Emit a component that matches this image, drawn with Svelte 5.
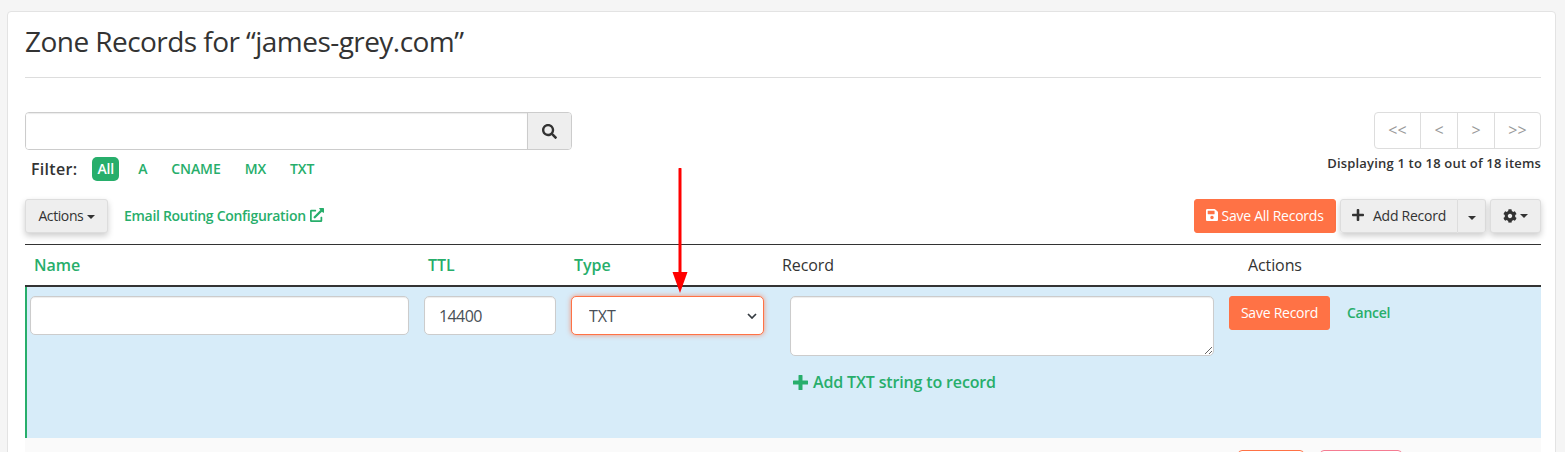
<script>
    const filters = ["All", "A", "CNAME", "MX", "TXT"];
    const pages = ["<<", "<", ">", ">>"];
</script>

<div class="page">
    <div class="card">
        <h1>Zone Records for “james-grey.com”</h1>
        <hr />

        <div class="top-row">
            <div class="left-col">
                <div class="search">
                    <input type="text" />
                    <button class="search-btn" aria-label="Search">
                        <svg viewBox="0 0 512 512" width="15" height="15"><path fill="#333" d="M505 442.700L405.300 343c-4.500-4.500-10.600-7-17-7H372c27.600-35.300 44-79.700 44-128C416 93.100 322.900 0 208 0S0 93.100 0 208s93.100 208 208 208c48.300 0 92.700-16.400 128-44v16.300c0 6.400 2.500 12.500 7 17l99.700 99.700c9.400 9.400 24.600 9.400 33.900 0l28.300-28.300c9.400-9.400 9.400-24.600.1-34zM208 336c-70.700 0-128-57.200-128-128 0-70.700 57.200-128 128-128 70.700 0 128 57.200 128 128 0 70.700-57.200 128-128 128z"/></svg>
                    </button>
                </div>
                <div class="filter">
                    <strong>Filter:</strong>
                    {#each filters as f, i}
                        <span class="pill" class:active={i === 0}>{f}</span>
                    {/each}
                </div>
            </div>
            <div class="right-col">
                <div class="pager">
                    {#each pages as p}
                        <span class="page-btn">{p}</span>
                    {/each}
                </div>
                <div class="count">Displaying 1 to 18 out of 18 items</div>
            </div>
        </div>

        <div class="toolbar">
            <div class="tool-left">
                <button class="btn shadow">Actions <span class="caret"></span></button>
                <span class="link">Email Routing Configuration
                    <svg viewBox="0 0 512 512" width="14" height="14"><path fill="#27ae6b" d="M432 320h-32a16 16 0 0 0-16 16v112H64V128h144a16 16 0 0 0 16-16V80a16 16 0 0 0-16-16H48a48 48 0 0 0-48 48v352a48 48 0 0 0 48 48h352a48 48 0 0 0 48-48V336a16 16 0 0 0-16-16zM488 0H360c-21.400 0-32 25.900-17 41l35.700 35.700L135 320.400a24 24 0 0 0 0 34l22.600 22.600a24 24 0 0 0 34 0l243.700-243.700L471 169c15 15 41 4.500 41-17V24a24 24 0 0 0-24-24z"/></svg>
                </span>
            </div>
            <div class="tool-right">
                <button class="btn orange save-all">
                    <svg viewBox="0 0 448 512" width="12" height="14"><path fill="#fff" d="M433.900 129.900l-83.900-83.900A48 48 0 0 0 316.100 32H48C21.500 32 0 53.500 0 80v352c0 26.500 21.500 48 48 48h352c26.500 0 48-21.500 48-48V163.900a48 48 0 0 0-14.100-34zM224 416c-35.300 0-64-28.700-64-64 0-35.300 28.700-64 64-64s64 28.700 64 64c0 35.300-28.700 64-64 64zm96-304.500V212c0 6.600-5.400 12-12 12H76c-6.600 0-12-5.400-12-12V108c0-6.600 5.400-12 12-12h228.500c3.200 0 6.200 1.300 8.500 3.500l3.500 3.500a12 12 0 0 1 3.500 8.500z"/></svg>
                    Save All Records
                </button>
                <div class="split shadow">
                    <button class="btn add">
                        <svg viewBox="0 0 448 512" width="12" height="14"><path fill="#333" d="M416 208H272V64c0-17.700-14.300-32-32-32h-32c-17.700 0-32 14.300-32 32v144H32c-17.700 0-32 14.300-32 32v32c0 17.700 14.300 32 32 32h144v144c0 17.700 14.300 32 32 32h32c17.700 0 32-14.300 32-32V304h144c17.700 0 32-14.300 32-32v-32c0-17.700-14.300-32-32-32z"/></svg>
                        <span>Add Record</span>
                    </button>
                    <button class="btn drop" aria-label="More"><span class="caret"></span></button>
                </div>
                <button class="btn gear shadow" aria-label="Settings">
                    <svg viewBox="0 0 512 512" width="14" height="14"><path fill="#333" d="M487.400 315.700l-42.600-24.600c4.300-23.200 4.300-47 0-70.200l42.600-24.600c4.900-2.800 7.100-8.600 5.500-14-11.100-35.600-30-67.800-54.700-94.600-3.800-4.100-10-5.100-14.800-2.300L380.800 110c-17.900-15.400-38.500-27.300-60.800-35.100V25.800c0-5.600-3.900-10.500-9.400-11.700-36.700-8.200-74.300-7.800-109.200 0-5.500 1.200-9.400 6.100-9.400 11.700V75c-22.200 7.900-42.800 19.800-60.800 35.100L88.700 85.500c-4.900-2.800-11-1.900-14.800 2.300-24.700 26.700-43.600 58.900-54.700 94.600-1.700 5.400.6 11.200 5.500 14L67.300 221c-4.300 23.200-4.300 47 0 70.200l-42.600 24.600c-4.900 2.800-7.100 8.600-5.500 14 11.100 35.600 30 67.800 54.700 94.600 3.800 4.100 10 5.100 14.800 2.300l42.600-24.600c17.900 15.400 38.500 27.300 60.800 35.100v49.200c0 5.600 3.900 10.500 9.400 11.700 36.700 8.200 74.300 7.800 109.200 0 5.500-1.200 9.400-6.100 9.400-11.700v-49.200c22.200-7.900 42.800-19.800 60.800-35.100l42.600 24.600c4.900 2.800 11 1.900 14.800-2.300 24.700-26.700 43.600-58.900 54.700-94.600 1.500-5.500-.7-11.300-5.600-14.100zM256 336c-44.100 0-80-35.900-80-80s35.900-80 80-80 80 35.900 80 80-35.900 80-80 80z"/></svg>
                    <span class="caret"></span>
                </button>
            </div>
        </div>

        <div class="table">
            <div class="thead">
                <span class="sort">Name</span>
                <span class="sort">TTL</span>
                <span class="sort">Type</span>
                <span>Record</span>
                <span>Actions</span>
            </div>
            <div class="edit-row">
                <div><input class="field name" type="text" /></div>
                <div><input class="field ttl" type="text" value="14400" /></div>
                <div class="select-wrap">
                    <select class="field type">
                        <option>TXT</option>
                    </select>
                    <svg class="chevron" viewBox="0 0 10 6" width="10" height="6"><path d="M1 1L5 5L9 1" fill="none" stroke="#343a40" stroke-width="1.700" /></svg>
                </div>
                <div>
                    <textarea class="field record"></textarea>
                    <div class="add-string">
                        <svg viewBox="0 0 15 15" width="15" height="15"><path fill="#27ae6b" d="M5.500 0.500Q5.500 0 6 0H9Q9.500 0 9.500 0.500V5.500H14.500Q15 5.500 15 6V9Q15 9.500 14.500 9.500H9.500V14.500Q9.500 15 9 15H6Q5.500 15 5.500 14.500V9.500H0.500Q0 9.500 0 9V6Q0 5.500 0.500 5.500H5.500Z"/></svg>
                        Add TXT string to record
                    </div>
                </div>
                <div class="row-actions">
                    <button class="btn orange save">Save Record</button>
                    <span class="cancel">Cancel</span>
                </div>
            </div>
            <div class="next-row">
                <span class="ghost edit"></span>
                <span class="ghost del"></span>
            </div>
        </div>

        <!-- annotation arrow drawn over the table -->
        <svg class="arrow" viewBox="0 0 20 126" width="20" height="126">
            <path d="M10 1V108" stroke="#f00" stroke-width="3" stroke-linecap="round" fill="none" />
            <path d="M2.500 104H17.500L10 125Z" fill="#f00" />
        </svg>
    </div>
</div>

<style>
    :global(body) {
        margin: 0;
        background: #f5f5f5;
        overflow: hidden;
    }

    .page {
        height: 452px;
        overflow: hidden;
        padding: 11px 9px 0 7px;
        box-sizing: border-box;
        font-family: "Open Sans", sans-serif;
        color: #333;
        font-size: 14px;
    }

    .card {
        position: relative;
        background: #fff;
        border: 1px solid #e3e3e3;
        border-radius: 4px;
        padding: 0 14px 0 17px;
        height: 500px;
    }

    h1 {
        margin: 0;
        padding-top: 10px;
        font-size: 28px;
        line-height: 38px;
        font-weight: 400;
        letter-spacing: -0.55px;
        color: #333;
    }

    hr {
        border: 0;
        border-top: 1px solid #ddd;
        margin: 17px 0 34px;
    }

    .top-row {
        display: flex;
        justify-content: space-between;
    }

    .search {
        display: flex;
        width: 547px;
        height: 38px;
        box-sizing: border-box;
        border: 1px solid #ccc;
        border-radius: 4px;
        overflow: hidden;
    }
    .search input {
        flex: 1;
        border: 0;
        outline: 0;
        padding: 0;
        box-shadow: inset 0 1px 1px rgba(0, 0, 0, 0.08);
    }
    .search-btn {
        width: 44px;
        border: 0;
        border-left: 1px solid #ccc;
        background: #eee;
        padding: 0;
        display: flex;
        align-items: center;
        justify-content: center;
    }

    .filter {
        display: flex;
        align-items: center;
        margin-top: 7px;
        padding-left: 6px;
    }
    .filter strong {
        font-size: 16px;
        font-weight: 600;
        letter-spacing: 0.3px;
        margin-right: 15px;
    }
    .pill {
        color: #27ae6b;
        font-size: 14px;
        font-weight: 600;
        letter-spacing: -0.1px;
        line-height: 24px;
        padding: 0 5px;
        margin-right: 14px;
        border-radius: 5px;
    }
    .pill.active {
        background: #27ae6b;
        color: #fff;
    }

    .right-col {
        display: flex;
        flex-direction: column;
        align-items: flex-end;
    }
    .pager {
        display: flex;
        height: 37px;
        box-sizing: border-box;
        border: 1px solid #ddd;
        border-radius: 4px;
    }
    .page-btn {
        width: 36px;
        border-left: 1px solid #ddd;
        color: #999;
        text-align: center;
        line-height: 35px;
        font-size: 16px;
    }
    .page-btn:first-child {
        border-left: 0;
        width: 45px;
    }
    .page-btn:last-child {
        width: 45px;
    }
    .count {
        margin-top: 5px;
        font-size: 13px;
        font-weight: 600;
        letter-spacing: 0.18px;
    }

    .toolbar {
        display: flex;
        justify-content: space-between;
        margin-top: 18px;
        padding-bottom: 11px;
        border-bottom: 1px solid #333;
    }
    .tool-left,
    .tool-right {
        display: flex;
        align-items: center;
    }

    .btn {
        font-family: inherit;
        font-size: 14px;
        letter-spacing: -0.25px;
        color: #333;
        background: #eee;
        border: 1px solid #ddd;
        border-radius: 3px;
        height: 34px;
        padding: 0 0 2px;
        box-sizing: border-box;
    }
    .shadow {
        box-shadow: 0 3px 6px rgba(0, 0, 0, 0.2);
        border-radius: 3px;
    }
    .tool-left .btn {
        width: 83px;
        letter-spacing: -0.4px;
    }
    .link {
        color: #27ae6b;
        font-size: 14px;
        font-weight: 600;
        letter-spacing: -0.3px;
        margin: 0 0 2px 16px;
        display: flex;
        align-items: center;
        gap: 4px;
    }

    .caret {
        display: inline-block;
        width: 0;
        height: 0;
        vertical-align: middle;
        border-top: 4px solid #333;
        border-left: 4px solid transparent;
        border-right: 4px solid transparent;
    }

    .orange {
        background: #ff7245;
        border-color: #ff7245;
        color: #fff;
    }
    .save-all {
        width: 142px;
        display: flex;
        align-items: center;
        justify-content: center;
        gap: 3px;
    }
    .split {
        display: flex;
        margin-left: 4px;
    }
    .add {
        width: 118px;
        border-radius: 3px 0 0 3px;
        display: flex;
        align-items: center;
        justify-content: center;
        gap: 9px;
    }
    .drop {
        width: 28px;
        border-left: 0;
        padding: 0;
        border-radius: 0 3px 3px 0;
    }
    .gear {
        width: 51px;
        margin-left: 4px;
        padding: 0;
        display: flex;
        align-items: center;
        justify-content: center;
        gap: 3px;
    }

    .thead {
        display: grid;
        grid-template-columns: 394px 146px 208px 466px 1fr;
        padding-left: 9px;
        height: 40px;
        align-items: center;
        font-size: 16px;
        letter-spacing: -0.1px;
        border-bottom: 2px solid #333;
    }
    .sort {
        color: #27ae6b;
        font-weight: 600;
        letter-spacing: 0;
    }

    .edit-row {
        display: grid;
        grid-template-columns: 394px 147px 219px 439px 1fr;
        height: 151px;
        box-sizing: border-box;
        padding: 9px 0 0 3px;
        background: #d7ecf9;
        border-left: 2px solid #27ae6b;
    }
    .field {
        font-family: inherit;
        font-size: 16px;
        color: #495057;
        background: #fff;
        border: 1px solid #ccc;
        border-radius: 5px;
        box-sizing: border-box;
        height: 39px;
        padding: 0 14px;
        display: block;
        outline: 0;
        box-shadow: inset 0 1px 1px rgba(0, 0, 0, 0.075);
    }
    .name {
        width: 379px;
    }
    .ttl {
        width: 132px;
        letter-spacing: -0.6px;
    }
    .select-wrap {
        position: relative;
        width: 193px;
    }
    .type {
        width: 193px;
        appearance: none;
        padding-left: 17px;
        border-color: #ff7245;
        box-shadow: 0 0 5px rgba(255, 114, 69, 0.75);
    }
    .chevron {
        position: absolute;
        right: 7px;
        top: 17px;
    }
    .record {
        width: 424px;
        height: 60px;
        resize: both;
        padding: 6px 14px;
    }
    .add-string {
        display: flex;
        align-items: center;
        gap: 5px;
        margin: 15px 0 0 3px;
        color: #27ae6b;
        font-weight: 600;
        font-size: 16px;
        letter-spacing: -0.15px;
    }
    .row-actions {
        display: flex;
        align-items: flex-start;
    }
    .save {
        width: 101px;
    }
    .cancel {
        color: #27ae6b;
        font-weight: 600;
        letter-spacing: -0.3px;
        margin-left: 17px;
        line-height: 34px;
    }

    .next-row {
        background: #fafafa;
        height: 60px;
        padding: 12px 0 0 1213px;
        display: flex;
        box-sizing: border-box;
    }
    .ghost {
        display: block;
        height: 30px;
        background: #fff;
        border-radius: 4px;
    }
    .ghost.edit {
        width: 66px;
        border: 1px solid #ff7245;
        box-sizing: border-box;
    }
    .ghost.del {
        width: 82px;
        margin-left: 16px;
        border: 1px solid #f57c92;
        box-sizing: border-box;
    }

    .arrow {
        position: absolute;
        left: 662px;
        top: 156px;
    }
</style>
